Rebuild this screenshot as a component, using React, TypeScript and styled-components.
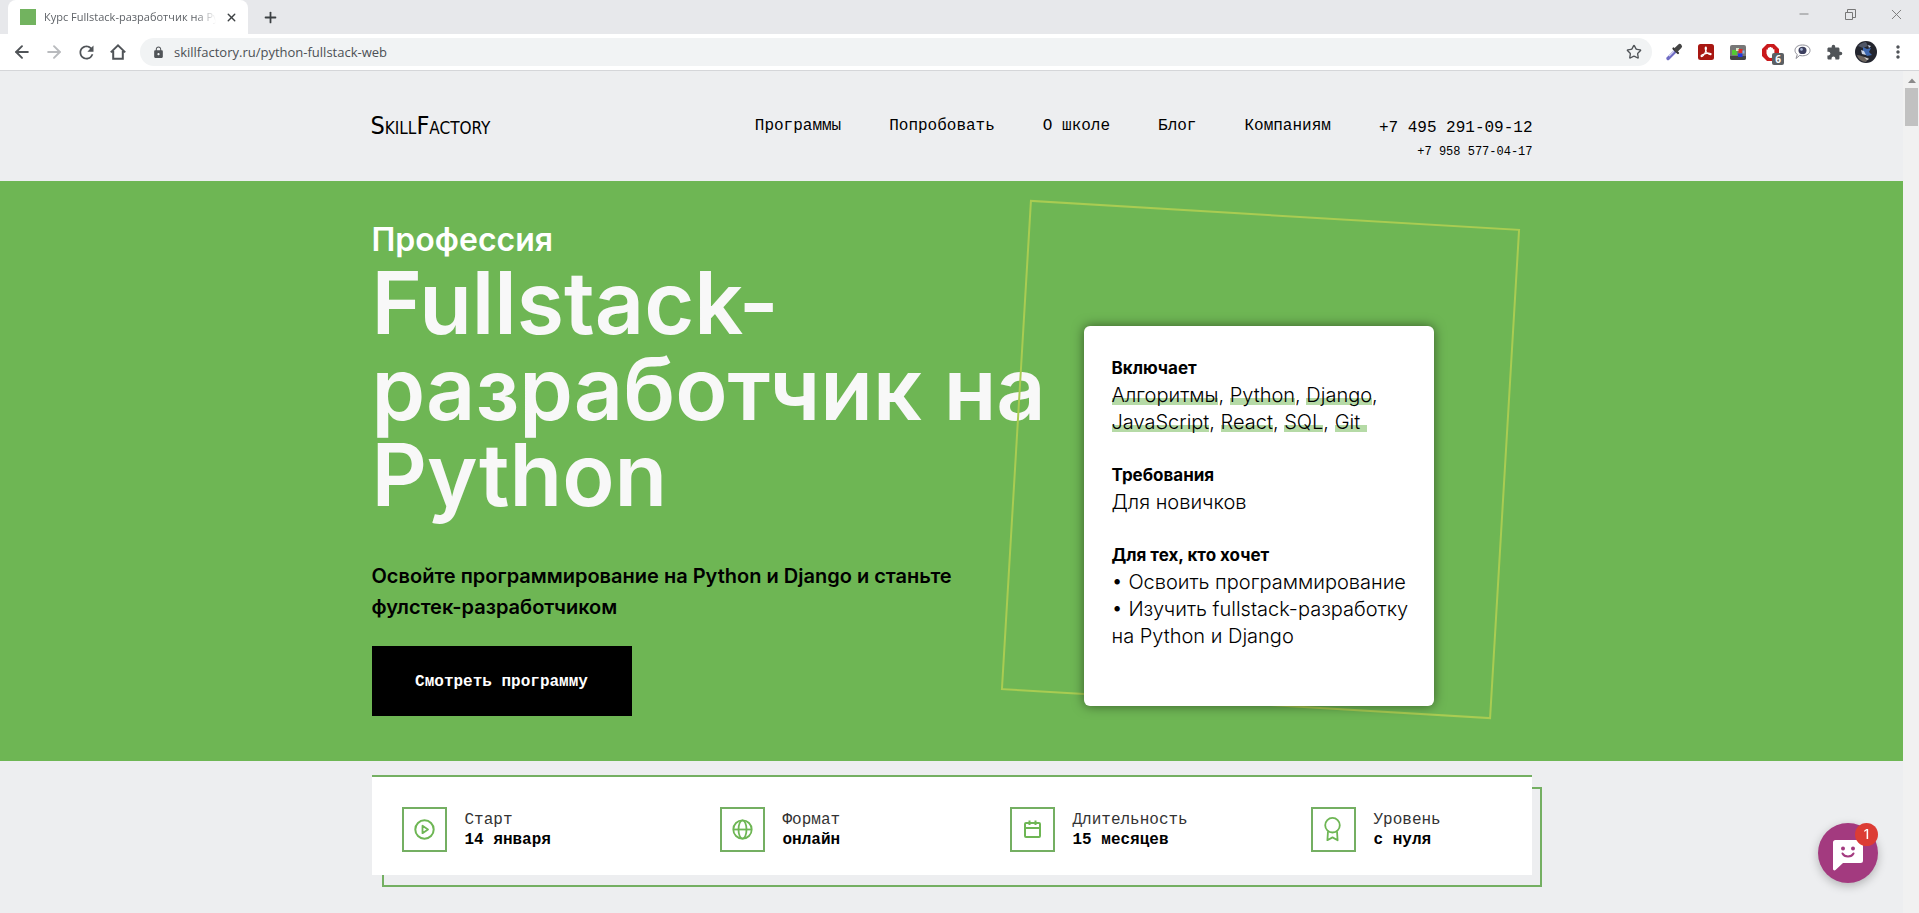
import React from 'react';
import styled, { createGlobalStyle, css } from 'styled-components';
import { ArrowLeft, ArrowRight, Minus, Plus, Star, X } from 'lucide-react';
import { MdExtension, MdLock, MdMoreVert, MdRefresh } from 'react-icons/md';

const green = '#6eb654';
const sans = "Inter, 'Noto Sans', sans-serif";
const mono = "'Liberation Mono', 'DejaVu Sans Mono', monospace";
const ui = "'Open Sans', 'Noto Sans', sans-serif";

const GlobalStyle = createGlobalStyle`
  *, *::before, *::after { box-sizing: border-box; }
  body { margin: 0; background: #edeef0; color: #000; font-family: ${sans}; }
  h1, h2, h3, p, ul, dl, dd { margin: 0; padding: 0; }
  a { color: inherit; text-decoration: none; }
  button { border: 0; padding: 0; background: none; font: inherit; color: inherit; cursor: pointer; }
  svg { display: block; }
`;

/* ---------- Browser window ---------- */

const Window = styled.div`
  min-height: 100vh;
  display: flex;
  flex-direction: column;
`;

const TabStrip = styled.div`
  height: 34px;
  padding-left: 8px;
  display: flex;
  align-items: stretch;
  background: #e7e8eb;
`;

const Tab = styled.div`
  width: 240px;
  padding: 0 10px 0 12px;
  display: flex;
  align-items: center;
  gap: 8px;
  border-radius: 8px 8px 0 0;
  background: #fff;
`;

const Favicon = styled.span`
  flex: none;
  width: 16px;
  height: 16px;
  background: #72b35f;
`;

const TabTitle = styled.span`
  flex: 1;
  overflow: hidden;
  white-space: nowrap;
  font: 11px/20px ${ui};
  color: #5f6368;
  mask-image: linear-gradient(90deg, #000 88%, transparent);
`;

const CloseTab = styled.button`
  flex: none;
  width: 14px;
  height: 14px;
  display: grid;
  place-items: center;
  color: #3c4043;
`;

const NewTab = styled(CloseTab)`
  width: 44px;
  height: 34px;
`;

const WindowControls = styled.div`
  height: 28px;
  margin-left: auto;
  display: flex;
`;

const WindowControl = styled.button`
  width: 46px;
  display: grid;
  place-items: center;
  color: #777;
`;

const Toolbar = styled.div`
  height: 37px;
  padding: 0 5px 0 6px;
  display: flex;
  align-items: center;
  background: #fff;
  border-bottom: 1px solid #d5d6d9;
`;

const ToolButton = styled.button<{ $muted?: boolean }>`
  position: relative;
  flex: none;
  width: 32px;
  height: 32px;
  display: grid;
  place-items: center;
  color: ${p => (p.$muted ? '#b9bbbe' : '#505458')};
`;

const AddressBar = styled.form`
  flex: 1;
  height: 28px;
  margin: 0 6px;
  padding: 0 10px 0 12px;
  display: flex;
  align-items: center;
  gap: 9px;
  border-radius: 14px;
  background: #f1f3f4;
  color: #505458;
`;

const AddressInput = styled.input`
  flex: 1;
  min-width: 0;
  border: 0;
  padding: 0;
  outline: 0;
  background: none;
  font: 13px/20px ${ui};
  color: #4c5055;
`;

const Counter = styled.span`
  position: absolute;
  right: 2px;
  bottom: 3px;
  width: 12px;
  height: 12px;
  border-radius: 2px;
  background: #5b5f63;
  color: #fff;
  font: 700 10px/12px ${ui};
  text-align: center;
`;

const Viewport = styled.div`
  flex: 1;
  display: flex;
`;

const Page = styled.div`
  flex: 1;
  min-width: 0;
`;

const Scrollbar = styled.div`
  flex: none;
  width: 16px;
  padding: 7px 1px 0 2px;
  display: flex;
  flex-direction: column;
  align-items: center;
  gap: 5px;
  background: #f1f1f1;
`;

const ScrollThumb = styled.div`
  width: 100%;
  height: 38px;
  background: #c1c1c1;
`;

/* ---------- Site header ---------- */

const Container = styled.div`
  max-width: 1160px;
  margin: 0 auto;
`;

const HeaderRow = styled(Container)`
  max-width: 1162px;
  height: 110px;
  padding-top: 45px;
  display: flex;
  align-items: flex-start;
  font: 16px/20px ${mono};
`;

const Logo = styled.a`
  margin-right: auto;
  font: 17px/20px 'DejaVu Sans Condensed', 'DejaVu Sans', sans-serif;
`;

const LogoCapital = styled.span`
  font-size: 25px;
`;

const Nav = styled.nav`
  display: flex;
  gap: 48px;
  margin-right: 48px;
`;

const Phones = styled.address`
  display: flex;
  flex-direction: column;
  align-items: flex-end;
  font-style: normal;
  line-height: 24px;
`;

const SecondPhone = styled.a`
  font-size: 12px;
`;

/* ---------- Hero ---------- */

const Hero = styled.section`
  background: ${green};
`;

const HeroRow = styled(Container)`
  display: flex;
  align-items: flex-start;
  justify-content: space-between;
  padding-bottom: 45px;
`;

const Intro = styled.div`
  width: 690px;
  padding-top: 39px;
`;

const Kicker = styled.p`
  font-size: 32px;
  line-height: 40px;
  font-weight: 600;
  color: #fff;
`;

const Title = styled.h1`
  font-size: 86px;
  line-height: 86px;
  font-weight: 600;
  color: #f8f8f8;
`;

const Lead = styled.p`
  max-width: 600px;
  margin-top: 43px;
  font-size: 20px;
  line-height: 31px;
  font-weight: 600;
`;

const ProgramButton = styled.button`
  width: 260px;
  height: 70px;
  margin-top: 23px;
  padding-top: 2px;
  display: block;
  background: #000;
  color: #fff;
  font: 700 16px/20px ${mono};
`;

const CardArea = styled.div`
  position: relative;
  width: 350px;
  margin: 145px 98px 0 0;
`;

const TiltedFrame = styled.div`
  position: absolute;
  left: -69px;
  top: -112px;
  width: 491px;
  height: 491px;
  border: 2px solid #a9cc52;
  transform: rotate(3.4deg);
`;

const Card = styled.div`
  position: relative;
  padding: 29px 20px 56px 28px;
  display: flex;
  flex-direction: column;
  gap: 26px;
  border-radius: 6px;
  background: #fff;
  box-shadow: 0 0 12px rgba(0, 0, 0, 0.5);
`;

const CardHeading = styled.h3`
  font-size: 17px;
  line-height: 27px;
  font-weight: 700;
`;

const CardText = styled.p`
  font-size: 20px;
  line-height: 27px;
  font-weight: 300;
  white-space: nowrap;
`;

const Skill = styled.span<{ $wide?: boolean }>`
  background: linear-gradient(transparent 64%, #b5daa6 64%, #b5daa6 93%, transparent 93%);
  ${p => p.$wide && css`padding-right: 7px;`}
`;

/* ---------- Facts ---------- */

const Facts = styled(Container)`
  position: relative;
  isolation: isolate;
  margin-top: 14px;
  margin-bottom: 38px;

  &::before {
    content: '';
    position: absolute;
    z-index: -1;
    inset: 12px -10px -12px 10px;
    border: 2px solid #74af62;
  }
`;

const FactList = styled.dl`
  display: grid;
  grid-template-columns: 318fr 290fr 301fr 221fr;
  padding: 30px 0 23px 30px;
  border-top: 2px solid #74af62;
  background: #fff;
`;

const Fact = styled.div`
  display: flex;
  align-items: center;
  gap: 18px;
  font: 16px/20px ${mono};
`;

const FactIcon = styled.span`
  width: 45px;
  height: 45px;
  display: grid;
  place-items: center;
  border: 2px solid #74af62;
  color: ${green};
`;

const FactName = styled.dt`
  color: #333;
`;

const FactValue = styled.dd`
  font-weight: 700;
`;

/* ---------- Chat ---------- */

const ChatButton = styled.button`
  position: fixed;
  right: 41px;
  bottom: 30px;
  width: 60px;
  height: 60px;
  border-radius: 50%;
  background: #a33a7f;
  box-shadow: 0 3px 10px rgba(0, 0, 0, 0.25);
`;

const ChatBadge = styled.span`
  position: absolute;
  top: 0;
  right: 0;
  width: 23px;
  height: 23px;
  border-radius: 50%;
  background: #dc3c34;
  color: #fff;
  font: 500 13px/23px ${sans};
  text-align: center;
`;

/* ---------- Drawings ---------- */

const HomeIcon = () => (
  <svg width="18" height="18" viewBox="0 0 18 18" fill="none" stroke="currentColor" strokeWidth="2">
    <path d="M1.8 9.4 9 2.4l7.2 7M4.2 8v7.8h9.6V8" />
  </svg>
);

const RestoreIcon = () => (
  <svg width="11" height="11" viewBox="0 0 11 11" fill="none" stroke="currentColor">
    <path d="M.5 3.5h7v7h-7zM2.5 3V.5h8v8H8" />
  </svg>
);

const PipetteIcon = () => (
  <svg width="18" height="18" viewBox="0 0 18 18" fill="none">
    <path d="m3 15.500 7-7" stroke="#6f6cc4" strokeWidth="3.400" strokeLinecap="round" />
    <path d="m4 13.200 5-5" stroke="#d8d8f4" strokeWidth="1.200" />
    <path d="m8.500 5.500 4.500 4.500" stroke="#333" strokeWidth="2.200" strokeLinecap="round" />
    <path d="m11.500 6.500 3.200-3.200" stroke="#444" strokeWidth="4.600" strokeLinecap="round" />
  </svg>
);

const PdfIcon = () => (
  <svg width="16" height="16" viewBox="0 0 16 16">
    <rect width="16" height="16" rx="2.500" fill="#a81712" />
    <path
      d="M3.200 12.300c-.9-1.100 3.200-2.700 5.600-3 2-.3 4.500-.2 4.200.9-.4 1.200-3.300-.3-4.600-2.200C7.200 6.200 6.800 3.200 7.800 3.200c1.200 0 .4 3.400-.9 6-1.100 2.100-2.900 4-3.700 3.100Z"
      fill="none"
      stroke="#fff"
      strokeWidth="1.200"
    />
  </svg>
);

const BlocksIcon = () => (
  <svg width="16" height="15" viewBox="0 0 16 15">
    <rect width="16" height="15" rx="2" fill="#777" />
    <path d="M0 11h16v2a2 2 0 0 1-2 2H2a2 2 0 0 1-2-2Z" fill="#444" />
    <path d="M2 5h5v5H2z" fill="#54c832" />
    <path d="M6 3h3v3H6z" fill="#d9e7c9" />
    <path d="M8.500 4h4v4h-4z" fill="#e02b2b" />
    <path d="M8 8.500h4.500V12H8z" fill="#2438e0" />
    <path d="M12.500 5.500h2v3h-2z" fill="#8ab4e8" />
  </svg>
);

const AdBlockIcon = () => (
  <svg width="17" height="17" viewBox="0 0 17 17">
    <path d="M5 0h7l5 5v7l-5 5H5l-5-5V5Z" fill="#c9191c" />
    <path d="M4.500 9.500V5.600h1.400V3.800h1.600V3h1.800v.8h1.600v1.400h1.500V10c0 2.400-1.200 4-3.600 4-2.200 0-3.300-1.700-4.300-4.500Z" fill="#fff" />
  </svg>
);

const BubbleIcon = () => (
  <svg width="17" height="16" viewBox="0 0 17 16">
    <path d="M8.500 1C13 1 16 3.200 16 6.400s-3 5.400-7.500 5.400c-1 0-2-.1-2.800-.4L2 14.500l1.300-4C1.800 9.500 1 8 1 6.400 1 3.200 4 1 8.500 1Z" fill="#fff" stroke="#8d8d96" />
    <ellipse cx="8.500" cy="6.400" rx="4" ry="3.700" fill="#3c3f5e" />
    <circle cx="7.500" cy="5.400" r="1.300" fill="#a9b7d8" />
  </svg>
);

const AvatarIcon = () => (
  <svg width="22" height="22" viewBox="0 0 22 22">
    <circle cx="11" cy="11" r="11" fill="#23252e" />
    <path d="M3 5c3-3 6-4 8-4l2 4-5 2Z" fill="#4f5666" />
    <path d="m8 6 4 2 4-1-2 4 3 3-5 1-4-4Z" fill="#3e68b0" />
    <path d="m6 9 3 1 2 4-4-1ZM13 4l3 1-2 2Z" fill="#c9d3e6" />
    <path d="M2 14c4 0 8 3 12 3l-3 4c-4 0-8-3-9-7Z" fill="#6d655f" />
    <path d="m9 16 5 2-2 1Z" fill="#ddd" />
  </svg>
);

const iconProps = { width: 29, height: 29, viewBox: '0 0 29 29', fill: 'none', stroke: 'currentColor', strokeWidth: 2 };

const PlayIcon = () => (
  <svg {...iconProps}>
    <circle cx="14.500" cy="14.500" r="9.200" />
    <path d="M12.500 10.800v7.400l5.500-3.700Z" strokeLinejoin="round" strokeWidth="1.800" />
  </svg>
);

const GlobeIcon = () => (
  <svg {...iconProps} strokeWidth={1.8}>
    <circle cx="14.500" cy="14.500" r="9.200" />
    <ellipse cx="14.500" cy="14.500" rx="4" ry="9.200" />
    <path d="M5.300 14.500h18.400" />
  </svg>
);

const CalendarIcon = () => (
  <svg {...iconProps} strokeLinejoin="round">
    <rect x="7" y="8" width="15" height="14" rx="1" />
    <path d="M7 13h15M11.500 5.500v4.500M17.500 5.500v4.500" />
  </svg>
);

const AwardIcon = () => (
  <svg {...iconProps} strokeWidth={1.8} strokeLinejoin="round">
    <circle cx="13.500" cy="10.200" r="7.300" />
    <path d="M9 16.200 8.400 25.200l5.100-2.800 5.100 2.800L18 16.200" />
  </svg>
);

const ChatIcon = () => (
  <svg width="60" height="60" viewBox="0 0 60 60">
    <path d="M17.500 17h25a2.500 2.500 0 0 1 2.500 2.500v18a2.500 2.500 0 0 1-2.500 2.500H25l-7.500 7c-1 .8-2.500.3-2.500-1V19.500a2.500 2.500 0 0 1 2.500-2.500Z" fill="#fff" />
    <circle cx="25" cy="25.500" r="2" fill="#a33a7f" />
    <circle cx="35" cy="25.500" r="2" fill="#a33a7f" />
    <path d="M24.500 30.500c2 4 9 4 11 0" fill="none" stroke="#a33a7f" strokeWidth="2" strokeLinecap="round" />
  </svg>
);

/* ---------- Data ---------- */

const navItems = ['Программы', 'Попробовать', 'О школе', 'Блог', 'Компаниям'];

const facts = [
  { name: 'Старт', value: '14 января', Icon: PlayIcon },
  { name: 'Формат', value: 'онлайн', Icon: GlobeIcon },
  { name: 'Длительность', value: '15 месяцев', Icon: CalendarIcon },
  { name: 'Уровень', value: 'с нуля', Icon: AwardIcon },
];

const BrowserChrome = () => (
  <header>
    <TabStrip>
      <Tab>
        <Favicon />
        <TabTitle>Курс Fullstack-разработчик на Python</TabTitle>
        <CloseTab aria-label="Закрыть вкладку"><X size={13} strokeWidth={2.5} /></CloseTab>
      </Tab>
      <NewTab aria-label="Новая вкладка"><Plus size={17} strokeWidth={2.5} /></NewTab>
      <WindowControls>
        <WindowControl aria-label="Свернуть"><Minus size={14} strokeWidth={1.5} /></WindowControl>
        <WindowControl aria-label="Восстановить"><RestoreIcon /></WindowControl>
        <WindowControl aria-label="Закрыть"><X size={17} strokeWidth={1.3} /></WindowControl>
      </WindowControls>
    </TabStrip>
    <Toolbar>
      <ToolButton aria-label="Назад"><ArrowLeft size={20} strokeWidth={2.3} /></ToolButton>
      <ToolButton $muted aria-label="Вперёд"><ArrowRight size={20} strokeWidth={2.3} /></ToolButton>
      <ToolButton aria-label="Обновить"><MdRefresh size={21} /></ToolButton>
      <ToolButton aria-label="Домой"><HomeIcon /></ToolButton>
      <AddressBar>
        <MdLock size={13} />
        <AddressInput aria-label="Адрес" defaultValue="skillfactory.ru/python-fullstack-web" />
        <Star size={16} strokeWidth={2} />
      </AddressBar>
      <ToolButton aria-label="Пипетка"><PipetteIcon /></ToolButton>
      <ToolButton aria-label="PDF"><PdfIcon /></ToolButton>
      <ToolButton aria-label="Блоки"><BlocksIcon /></ToolButton>
      <ToolButton aria-label="Блокировщик рекламы"><AdBlockIcon /><Counter>6</Counter></ToolButton>
      <ToolButton aria-label="Сообщения"><BubbleIcon /></ToolButton>
      <ToolButton aria-label="Расширения"><MdExtension size={17} /></ToolButton>
      <ToolButton aria-label="Профиль"><AvatarIcon /></ToolButton>
      <ToolButton aria-label="Меню"><MdMoreVert size={20} /></ToolButton>
    </Toolbar>
  </header>
);

export default function App() {
  return (
    <Window>
      <GlobalStyle />
      <BrowserChrome />
      <Viewport>
        <Page>
          <HeaderRow as="header">
            <Logo href="#"><LogoCapital>S</LogoCapital>KILL<LogoCapital>F</LogoCapital>ACTORY</Logo>
            <Nav>
              {navItems.map(item => <a key={item} href="#">{item}</a>)}
            </Nav>
            <Phones>
              <a href="tel:+74952910912">+7 495 291-09-12</a>
              <SecondPhone href="tel:+79585770417">+7 958 577-04-17</SecondPhone>
            </Phones>
          </HeaderRow>

          <Hero>
            <HeroRow>
              <Intro>
                <Kicker>Профессия</Kicker>
                <Title>Fullstack-разработчик на Python</Title>
                <Lead>Освойте программирование на Python и Django и станьте фулстек-разработчиком</Lead>
                <ProgramButton>Смотреть программу</ProgramButton>
              </Intro>
              <CardArea>
                <TiltedFrame />
                <Card>
                  <section>
                    <CardHeading>Включает</CardHeading>
                    <CardText>
                      <Skill>Алгоритмы</Skill>, <Skill>Python</Skill>, <Skill>Django</Skill>,<br />
                      <Skill>JavaScript</Skill>, <Skill>React</Skill>, <Skill>SQL</Skill>, <Skill $wide>Git</Skill>
                    </CardText>
                  </section>
                  <section>
                    <CardHeading>Требования</CardHeading>
                    <CardText>Для новичков</CardText>
                  </section>
                  <section>
                    <CardHeading>Для тех, кто хочет</CardHeading>
                    <CardText>
                      • Освоить программирование<br />
                      • Изучить fullstack-разработку<br />
                      на Python и Django
                    </CardText>
                  </section>
                </Card>
              </CardArea>
            </HeroRow>
          </Hero>

          <Facts>
            <FactList>
              {facts.map(({ name, value, Icon }) => (
                <Fact key={name}>
                  <FactIcon><Icon /></FactIcon>
                  <div>
                    <FactName>{name}</FactName>
                    <FactValue>{value}</FactValue>
                  </div>
                </Fact>
              ))}
            </FactList>
          </Facts>
        </Page>
        <Scrollbar>
          <svg width="8" height="5" viewBox="0 0 8 5"><path d="M0 5 4 .5 8 5Z" fill="#8a8a8a" /></svg>
          <ScrollThumb />
        </Scrollbar>
      </Viewport>
      <ChatButton aria-label="Открыть чат">
        <ChatIcon />
        <ChatBadge>1</ChatBadge>
      </ChatButton>
    </Window>
  );
}
